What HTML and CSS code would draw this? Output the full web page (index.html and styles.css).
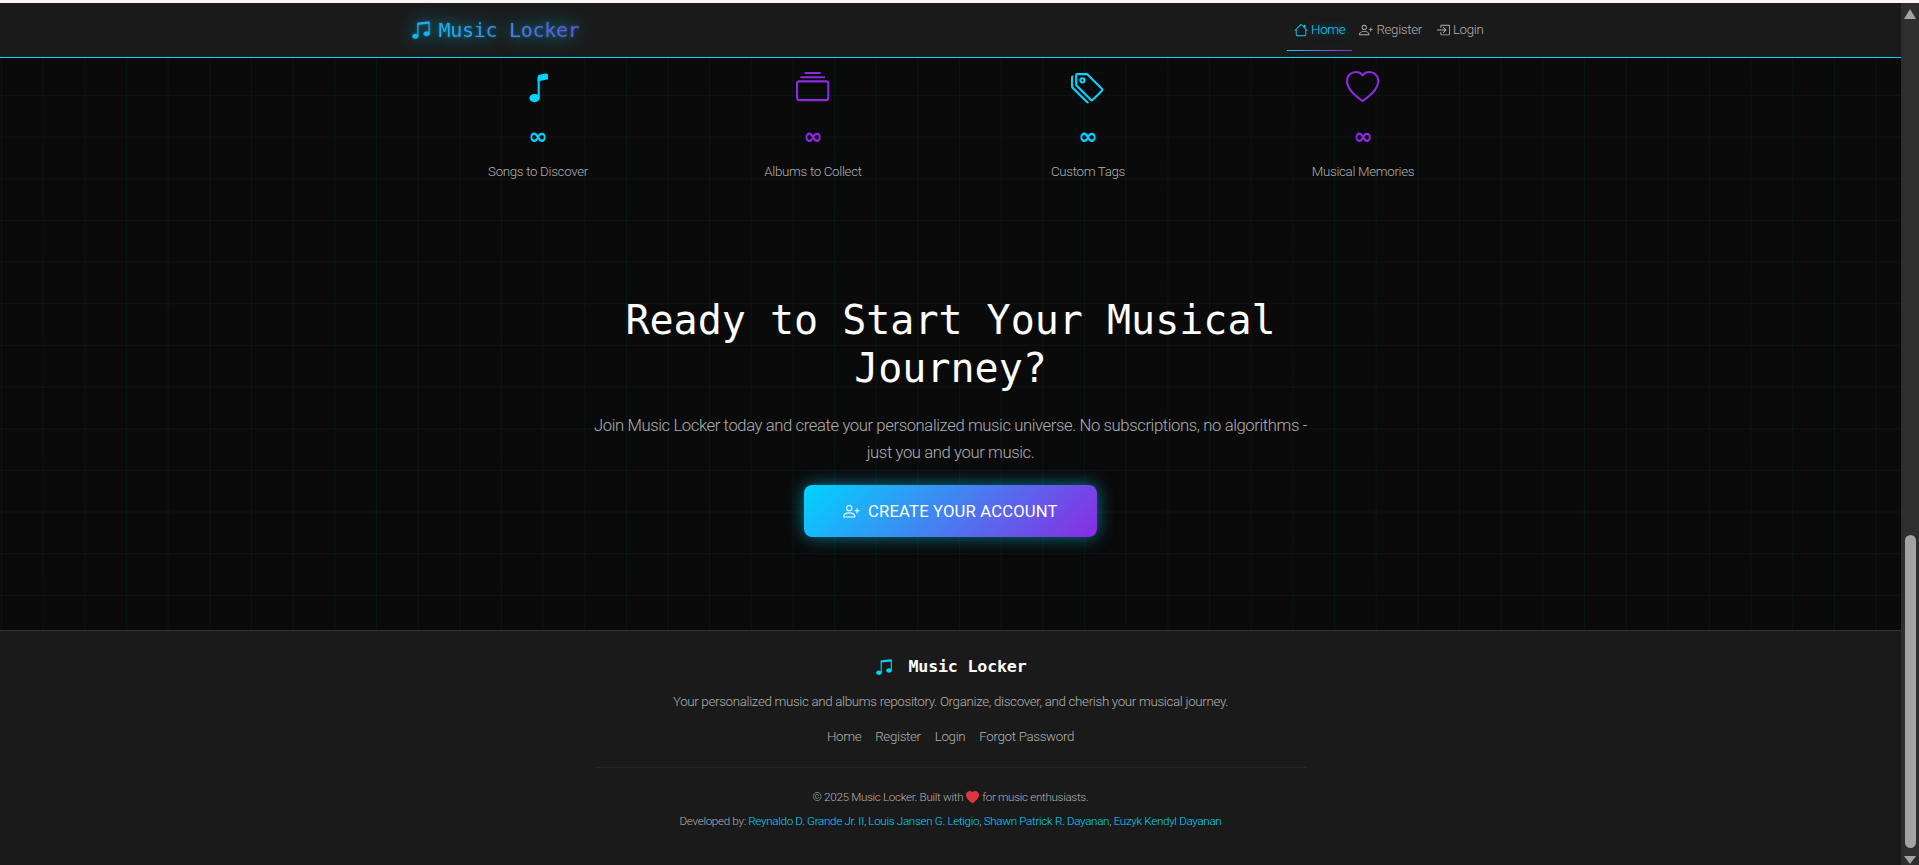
FILE: index.html
```html
<!DOCTYPE html>
<html>
<head>
    <title>Music Locker</title>
    <link rel="stylesheet" href="styles.css">
</head>
<body>

<div class="top-strip"></div>

<div class="window">
    <div class="page">

        <!-- Navbar -->
        <nav class="navbar">
            <div class="nav-inner">
                <a class="brand">
                    <svg class="brand-icon" viewBox="0 0 16 16"><path d="M6 13c0 1.105-1.12 2-2.500 2S1 14.105 1 13c0-1.104 1.12-2 2.500-2s2.500.896 2.500 2zm9-2c0 1.105-1.120 2-2.500 2s-2.500-.895-2.500-2 1.120-2 2.500-2 2.500.895 2.500 2z"/><path fill-rule="evenodd" d="M14 11V2h1v9h-1zM6 3v10H5V3h1z"/><path d="M5 2.905a1 1 0 0 1 .9-.995l8-.8a1 1 0 0 1 1.100.995V3L5 4V2.905z"/></svg>
                    <span class="brand-text">Music Locker</span>
                </a>
                <div class="nav-links">
                    <a class="nav-link active">
                        <svg class="nav-icon" viewBox="0 0 16 16"><path d="M2 13.500V7h1v6.500a.5.5 0 0 0 .5.5h9a.5.5 0 0 0 .5-.5V7h1v6.500a1.500 1.500 0 0 1-1.500 1.500h-9A1.500 1.500 0 0 1 2 13.500zm11-11V6l-2-2V2.500a.5.5 0 0 1 .5-.5h1a.5.5 0 0 1 .5.5z"/><path d="M7.293 1.500a1 1 0 0 1 1.414 0l6.647 6.646a.5.5 0 0 1-.708.708L8 2.207 1.354 8.854a.5.5 0 1 1-.708-.708L7.293 1.500z"/></svg>
                        Home
                    </a>
                    <a class="nav-link">
                        <svg class="nav-icon" viewBox="0 0 16 16"><path d="M6 8a3 3 0 1 0 0-6 3 3 0 0 0 0 6zm2-3a2 2 0 1 1-4 0 2 2 0 0 1 4 0zm4 8c0 1-1 1-1 1H1s-1 0-1-1 1-4 6-4 6 3 6 4zm-1-.004c-.001-.246-.154-.986-.832-1.664C9.516 10.680 8.289 10 6 10c-2.290 0-3.516.68-4.168 1.332-.678.678-.83 1.418-.832 1.664h10z"/><path d="M13.500 5a.5.5 0 0 1 .5.5V7h1.500a.5.5 0 0 1 0 1H14v1.500a.5.5 0 0 1-1 0V8h-1.500a.5.5 0 0 1 0-1H13V5.500a.5.5 0 0 1 .5-.5z"/></svg>
                        Register
                    </a>
                    <a class="nav-link">
                        <svg class="nav-icon" viewBox="0 0 16 16"><path d="M6 3.500a.5.5 0 0 1 .5-.5h8a.5.5 0 0 1 .5.5v9a.5.5 0 0 1-.5.5h-8a.5.5 0 0 1-.5-.5v-2a.5.5 0 0 0-1 0v2A1.500 1.500 0 0 0 6.500 14h8a1.500 1.500 0 0 0 1.500-1.500v-9A1.500 1.500 0 0 0 14.500 2h-8A1.500 1.500 0 0 0 5 3.500v2a.5.5 0 0 0 1 0v-2z"/><path d="M11.854 8.354a.5.5 0 0 0 0-.708l-3-3a.5.5 0 1 0-.708.708L10.293 7.500H1.500a.5.5 0 0 0 0 1h8.793l-2.147 2.146a.5.5 0 0 0 .708.708l3-3z"/></svg>
                        Login
                    </a>
                </div>
            </div>
        </nav>

        <main class="main">
            <!-- Stats -->
            <section class="stats">
                <div class="stat cyan">
                    <svg class="stat-icon" viewBox="0 0 16 16"><path d="M9 13c0 1.105-1.120 2-2.500 2S4 14.105 4 13s1.120-2 2.500-2 2.500.895 2.500 2z"/><path fill-rule="evenodd" d="M9 3v10H8V3h1z"/><path d="M8 2.820a1 1 0 0 1 .804-.98l3-.6A1 1 0 0 1 13 2.220V4L8 5V2.820z"/></svg>
                    <div class="stat-value">∞</div>
                    <div class="stat-label">Songs to Discover</div>
                </div>
                <div class="stat purple">
                    <svg class="stat-icon" viewBox="0 0 16 16"><path d="M2.500 3.500a.5.5 0 0 1 0-1h11a.5.5 0 0 1 0 1h-11zm2-2a.5.5 0 0 1 0-1h7a.5.5 0 0 1 0 1h-7zM0 13a1.500 1.500 0 0 0 1.500 1.500h13A1.500 1.500 0 0 0 16 13V6a1.500 1.500 0 0 0-1.500-1.500h-13A1.500 1.500 0 0 0 0 6v7zm1.500.5A.5.5 0 0 1 1 13V6a.5.5 0 0 1 .5-.5h13a.5.5 0 0 1 .5.5v7a.5.5 0 0 1-.5.5h-13z"/></svg>
                    <div class="stat-value">∞</div>
                    <div class="stat-label">Albums to Collect</div>
                </div>
                <div class="stat cyan">
                    <svg class="stat-icon" viewBox="0 0 16 16"><path d="M3 2v4.586l7 7L14.586 9l-7-7H3zM2 2a1 1 0 0 1 1-1h4.586a1 1 0 0 1 .707.293l7 7a1 1 0 0 1 0 1.414l-4.586 4.586a1 1 0 0 1-1.414 0l-7-7A1 1 0 0 1 2 6.586V2z"/><path d="M5.500 5a.5.5 0 1 1 0-1 .5.5 0 0 1 0 1zm0 1a1.500 1.500 0 1 0 0-3 1.500 1.500 0 0 0 0 3zM1 7.086a1 1 0 0 0 .293.707L8.750 15.250l-.043.043a1 1 0 0 1-1.414 0l-7-7A1 1 0 0 1 0 7.586V3a1 1 0 0 1 1-1v5.086z"/></svg>
                    <div class="stat-value">∞</div>
                    <div class="stat-label">Custom Tags</div>
                </div>
                <div class="stat purple">
                    <svg class="stat-icon" viewBox="0 0 16 16"><path d="m8 2.748-.717-.737C5.600.281 2.514.878 1.400 3.053c-.523 1.023-.641 2.500.314 4.385.92 1.815 2.834 3.989 6.286 6.357 3.452-2.368 5.365-4.542 6.286-6.357.955-1.886.838-3.362.314-4.385C13.486.878 10.400.280 8.717 2.010L8 2.748zM8 15C-7.333 4.868 3.279-3.040 7.824 1.143c.06.055.119.112.176.171a3.120 3.120 0 0 1 .176-.17C12.720-3.042 23.333 4.867 8 15z"/></svg>
                    <div class="stat-value">∞</div>
                    <div class="stat-label">Musical Memories</div>
                </div>
            </section>

            <!-- Call to action -->
            <section class="cta">
                <h2 class="cta-title">Ready to Start Your Musical Journey?</h2>
                <p class="cta-text">Join Music Locker today and create your personalized music universe. No subscriptions, no algorithms - just you and your music.</p>
                <a class="cta-btn">
                    <svg class="cta-icon" viewBox="0 0 16 16"><path d="M6 8a3 3 0 1 0 0-6 3 3 0 0 0 0 6zm2-3a2 2 0 1 1-4 0 2 2 0 0 1 4 0zm4 8c0 1-1 1-1 1H1s-1 0-1-1 1-4 6-4 6 3 6 4zm-1-.004c-.001-.246-.154-.986-.832-1.664C9.516 10.680 8.289 10 6 10c-2.290 0-3.516.68-4.168 1.332-.678.678-.83 1.418-.832 1.664h10z"/><path d="M13.500 5a.5.5 0 0 1 .5.5V7h1.500a.5.5 0 0 1 0 1H14v1.500a.5.5 0 0 1-1 0V8h-1.500a.5.5 0 0 1 0-1H13V5.500a.5.5 0 0 1 .5-.5z"/></svg>
                    Create Your Account
                </a>
            </section>
        </main>

        <!-- Footer -->
        <footer class="footer">
            <div class="footer-brand">
                <svg class="footer-icon" viewBox="0 0 16 16"><path d="M6 13c0 1.105-1.120 2-2.500 2S1 14.105 1 13c0-1.104 1.120-2 2.500-2s2.500.896 2.500 2zm9-2c0 1.105-1.120 2-2.500 2s-2.500-.895-2.500-2 1.120-2 2.500-2 2.500.895 2.500 2z"/><path fill-rule="evenodd" d="M14 11V2h1v9h-1zM6 3v10H5V3h1z"/><path d="M5 2.905a1 1 0 0 1 .9-.995l8-.8a1 1 0 0 1 1.100.995V3L5 4V2.905z"/></svg>
                <span>Music Locker</span>
            </div>
            <p class="footer-tagline">Your personalized music and albums repository. Organize, discover, and cherish your musical journey.</p>
            <div class="footer-links">
                <a>Home</a>
                <a>Register</a>
                <a>Login</a>
                <a>Forgot Password</a>
            </div>
            <hr class="footer-line">
            <p class="footer-copy">© 2025 Music Locker. Built with <svg class="footer-heart" viewBox="0 0 16 16"><path fill-rule="evenodd" d="M8 1.314C12.438-3.248 23.534 4.735 8 15-7.534 4.736 3.562-3.248 8 1.314z"/></svg> for music enthusiasts.</p>
            <p class="footer-dev">Developed by: <a>Reynaldo D. Grande Jr. II</a>, <a>Louis Jansen G. Letigio</a>, <a>Shawn Patrick R. Dayanan</a>, <a>Euzyk Kendyl Dayanan</a></p>
        </footer>
    </div>

    <!-- Scrollbar of the window -->
    <div class="scrollbar">
        <div class="arrow-up"></div>
        <div class="thumb"></div>
        <div class="arrow-down"></div>
    </div>
</div>

</body>
</html>
```
FILE: styles.css
```css
* { box-sizing: border-box; }

html, body {
    margin: 0;
    height: 865px;
    overflow: hidden;
}
body {
    background: #0a0a0a;
    color: #b0b0b0;
    font-family: Roboto, "Open Sans", sans-serif;
    font-weight: 300;
    font-size: 13.33px;
    line-height: 1.5;
    letter-spacing: -0.33px;
}
svg { fill: currentColor; display: block; }

.top-strip { height: 3px; background: #fdf3f3; }

.window { display: flex; height: 862px; }
.page { flex: 1; display: flex; flex-direction: column; min-width: 0; }

/* navbar */
.navbar {
    height: 55px;
    flex: none;
    background: #1a1a1a;
    border-bottom: 1px solid #00d4ff;
}
.nav-inner {
    width: 1100px;
    height: 54px;
    margin: 0 auto;
    padding: 0 10px;
    display: flex;
    align-items: center;
    justify-content: space-between;
}
.brand {
    display: flex;
    align-items: center;
    gap: 8px;
    filter: drop-shadow(0 0 1px rgba(0,212,255,0.4)) drop-shadow(0 0 9px rgba(0,212,255,0.8));
}
.brand-icon { width: 20px; height: 20px; color: #18aef3; }
.brand-text {
    font-family: "DejaVu Sans Mono", monospace;
    font-size: 20px;
    font-weight: 400;
    letter-spacing: -0.3px;
    line-height: 24px;
    background: linear-gradient(90deg, #1caef2, #7a45e6);
    -webkit-background-clip: text;
    background-clip: text;
    color: transparent;
}
.nav-links { display: flex; align-self: flex-start; margin-top: 6px; }
.nav-link {
    position: relative;
    display: flex;
    align-items: center;
    gap: 3px;
    height: 42px;
    padding: 0 7px;
    color: #b0b0b0;
}
.nav-icon { width: 14px; height: 14px; }
.nav-link.active { color: #00d4ff; text-shadow: 0 0 10px rgba(0,212,255,0.5); }
.nav-link.active::after {
    content: "";
    position: absolute;
    left: 0; right: 0; bottom: 0;
    height: 1px;
    background: linear-gradient(90deg, #00d4ff, #8a2be2);
}

/* main area */
.main {
    flex: 1;
    background-color: #0a0a0a;
    background-image:
        linear-gradient(rgba(0,212,255,0.05) 1px, transparent 1px),
        linear-gradient(90deg, rgba(0,212,255,0.05) 1px, transparent 1px);
    background-size: 41.67px 41.67px;
    background-position: 0 37px, 1px 0;
}
.stats {
    width: 1100px;
    margin: 0 auto;
    display: grid;
    grid-template-columns: repeat(4, 1fr);
    padding-top: 13px;
}
.stat { display: flex; flex-direction: column; align-items: center; }
.stat.cyan { color: #00d4ff; }
.stat.purple { color: #8a2be2; }
.stat-icon { width: 33.3px; height: 33.3px; }
.stat-value {
    font-family: "DejaVu Sans", sans-serif;
    font-size: 23px;
    font-weight: 700;
    line-height: 28px;
    margin-top: 18px;
}
.stat-label { color: #b0b0b0; margin-top: 12px; }

.cta {
    display: flex;
    flex-direction: column;
    align-items: center;
    text-align: center;
    margin-top: 113.5px;
}
.cta-title {
    width: 733px;
    margin: 0;
    font-family: "DejaVu Sans Mono", monospace;
    font-size: 40px;
    font-weight: 400;
    line-height: 48px;
    letter-spacing: 0;
    color: #fff;
}
.cta-text {
    width: 733px;
    margin: 20.5px 0 0;
    font-size: 16.67px;
    line-height: 27px;
    letter-spacing: -0.4px;
    color: #b0b0b0;
}
.cta-btn {
    display: flex;
    align-items: center;
    gap: 8px;
    height: 52px;
    width: 293px;
    justify-content: center;
    margin-top: 19px;
    border-radius: 8px;
    color: #fff;
    font-size: 16.67px;
    font-weight: 400;
    letter-spacing: 0.15px;
    text-transform: uppercase;
    background: linear-gradient(135deg, #00d4ff, #8a2be2);
    box-shadow: 0 0 17px rgba(0,212,255,0.55);
}
.cta-icon { width: 16.67px; height: 16.67px; }

/* footer */
.footer {
    height: 235px;
    flex: none;
    background: #1a1a1a;
    border-top: 1px solid #333;
    display: flex;
    flex-direction: column;
    align-items: center;
}
.footer-brand {
    display: flex;
    align-items: center;
    gap: 16px;
    margin-top: 26px;
    color: #fff;
    font-family: "DejaVu Sans Mono", monospace;
    font-size: 16.67px;
    font-weight: 700;
    line-height: 20px;
    letter-spacing: -0.2px;
}
.footer-icon { width: 18px; height: 18px; color: #00d4ff; }
.footer-tagline { margin: 15px 0 0; }
.footer-links { display: flex; gap: 14px; margin-top: 15px; }
.footer-line {
    width: 710px;
    margin: 20px 0 0;
    border: 0;
    border-top: 1px solid #262626;
}
.footer-copy {
    display: flex;
    align-items: center;
    gap: 3px;
    margin: 21px 0 0;
    font-size: 11.67px;
}
.footer-heart { width: 13px; height: 13px; color: #dc3545; }
.footer-dev { margin: 7px 0 0; font-size: 11.67px; }
.footer-dev a { color: #00d4ff; }

/* window scrollbar */
.scrollbar {
    width: 18px;
    flex: none;
    background: #2e2e2e;
    display: flex;
    flex-direction: column;
    align-items: center;
    padding-top: 6px;
}
.arrow-up {
    border-left: 6px solid transparent;
    border-right: 6px solid transparent;
    border-bottom: 10px solid #a3a3a3;
}
.thumb {
    width: 11px;
    height: 313px;
    margin-top: 516px;
    background: #a3a3a3;
    border-radius: 6px;
}
.arrow-down {
    margin-top: 8px;
    border-left: 6px solid transparent;
    border-right: 6px solid transparent;
    border-top: 8px solid #a3a3a3;
}
```
